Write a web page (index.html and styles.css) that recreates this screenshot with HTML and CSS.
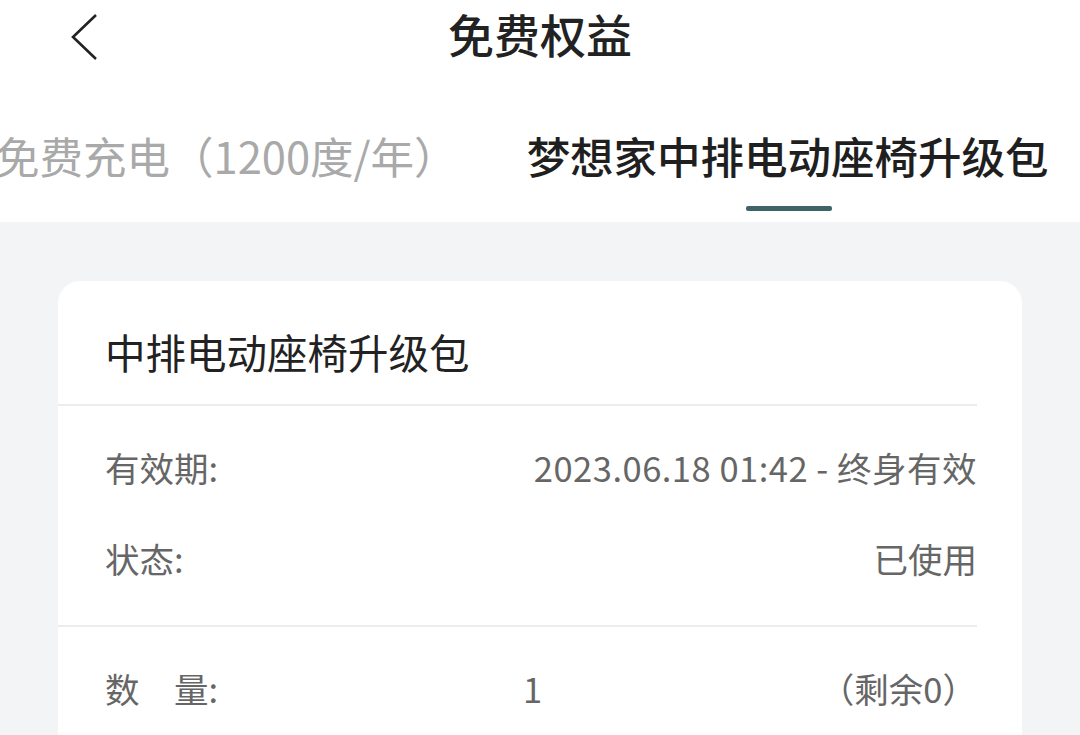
FILE: index.html
```html
<!DOCTYPE html>
<html lang="zh-CN">
<head>
  <meta charset="UTF-8">
  <meta name="viewport" content="width=device-width, initial-scale=1.0">
  <title>免费权益</title>
  <link rel="stylesheet" href="styles.css">
</head>
<body>

<header class="top-bar">
  <a class="back-btn" href="#">
    <svg width="40" height="50" viewBox="0 0 40 50"><polyline points="26,3 3,25 26,47" fill="none" stroke="#222" stroke-width="2.6" stroke-linejoin="miter"/></svg>
  </a>
  <h1 class="page-title">免费权益</h1>
</header>

<nav class="tabs">
  <div class="tab">免费充电（1200度/年）</div>
  <div class="tab active">梦想家中排电动座椅升级包</div>
</nav>

<main class="content">
  <div class="card">
    <div class="card-title">中排电动座椅升级包</div>
    <div class="divider"></div>
    <div class="card-section">
      <div class="info-row">
        <span class="label">有效期:</span>
        <span class="value spaced">2023.06.18 01:42 - 终身有效</span>
      </div>
      <div class="info-row">
        <span class="label">状态:</span>
        <span class="value">已使用</span>
      </div>
    </div>
    <div class="divider"></div>
    <div class="card-section">
      <div class="qty-row">
        <span class="label">数&emsp;量:</span>
        <span class="value">1</span>
        <span class="value">（剩余0）</span>
      </div>
    </div>
  </div>
</main>

</body>
</html>
```

FILE: styles.css
```css
body {
  margin: 0;
  padding: 0;
  font-family: "Noto Sans CJK SC", "Noto Sans", sans-serif;
  background: #f3f4f6;
  color: #222;
  height: 735px;
  overflow: hidden;
}

.top-bar {
  position: relative;
  height: 76px;
  background: #fff;
  display: flex;
  align-items: flex-start;
  justify-content: center;
}

.back-btn {
  position: absolute; /* sits over the centred title row */
  left: 70px;
  top: 12px;
}

.page-title {
  margin: 0;
  font-size: 46px;
  font-weight: 500;
  line-height: 66px;
  color: #222;
}

.tabs {
  background: #fff;
  height: 146px;
  display: flex;
  align-items: flex-start;
  gap: 69px;
  margin-left: -4px;
  white-space: nowrap;
  overflow: hidden;
}

.tab {
  font-size: 43.5px;
  line-height: 60px;
  margin-top: 50px;
  color: #a9a9a9;
  position: relative;
}

.tab.active {
  color: #1f1f1f;
  font-weight: 500;
}

.tab.active::after {
  content: "";
  position: absolute;
  left: 50%;
  margin-left: -42px;
  top: 80px;
  width: 86px;
  height: 5px;
  border-radius: 2px;
  background: #3e6468;
}

.content {
  padding: 59px 58px 0;
}

.card {
  background: #fff;
  border-radius: 22px;
  height: 520px;
}

.card-title {
  font-size: 40.5px;
  line-height: 60px;
  padding: 41px 47px 22px;
  color: #222;
}

.divider {
  height: 2px;
  background: #ececec;
  margin-right: 45px;
}

.card-section {
  padding: 36px 45px 42px 47px;
  display: flex;
  flex-direction: column;
  gap: 41px;
}

.info-row {
  display: flex;
  justify-content: space-between;
  font-size: 34.5px;
  line-height: 50px;
  color: #666;
}

.value.spaced {
  letter-spacing: 0.5px;
}

.qty-row {
  display: grid;
  grid-template-columns: 418px 1fr auto;
  font-size: 34.5px;
  line-height: 50px;
  color: #666;
}
```
